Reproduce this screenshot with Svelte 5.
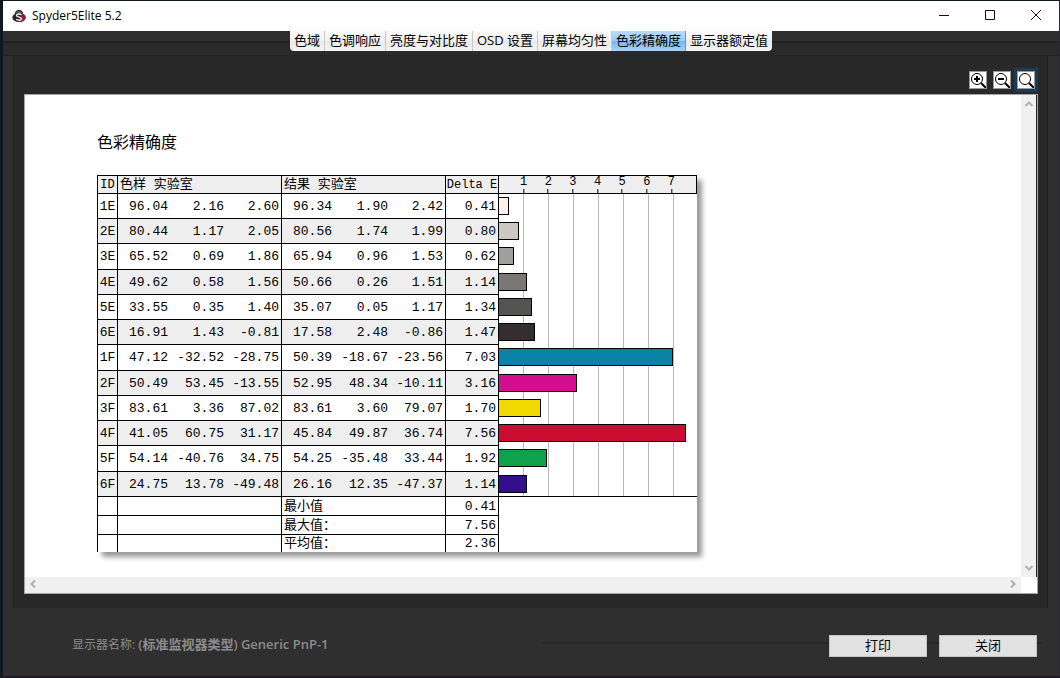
<script lang="ts">
    type Patch = { id: string; sample: string[]; result: string[]; delta: string; color: string };

    const tabs = ['色域', '色调响应', '亮度与对比度', 'OSD 设置', '屏幕均匀性', '色彩精确度', '显示器额定值'];
    const axis = [1, 2, 3, 4, 5, 6, 7];
    const axisMax = 8;

    const patches: Patch[] = [
        { id: '1E', sample: ['96.04', '2.16', '2.60'], result: ['96.34', '1.90', '2.42'], delta: '0.41', color: '#fdf1ea' },
        { id: '2E', sample: ['80.44', '1.17', '2.05'], result: ['80.56', '1.74', '1.99'], delta: '0.80', color: '#cbc7c2' },
        { id: '3E', sample: ['65.52', '0.69', '1.86'], result: ['65.94', '0.96', '1.53'], delta: '0.62', color: '#a19f9c' },
        { id: '4E', sample: ['49.62', '0.58', '1.56'], result: ['50.66', '0.26', '1.51'], delta: '1.14', color: '#7a7876' },
        { id: '5E', sample: ['33.55', '0.35', '1.40'], result: ['35.07', '0.05', '1.17'], delta: '1.34', color: '#545452' },
        { id: '6E', sample: ['16.91', '1.43', '-0.81'], result: ['17.58', '2.48', '-0.86'], delta: '1.47', color: '#342e31' },
        { id: '1F', sample: ['47.12', '-32.52', '-28.75'], result: ['50.39', '-18.67', '-23.56'], delta: '7.03', color: '#0b83a6' },
        { id: '2F', sample: ['50.49', '53.45', '-13.55'], result: ['52.95', '48.34', '-10.11'], delta: '3.16', color: '#d30f90' },
        { id: '3F', sample: ['83.61', '3.36', '87.02'], result: ['83.61', '3.60', '79.07'], delta: '1.70', color: '#f2da00' },
        { id: '4F', sample: ['41.05', '60.75', '31.17'], result: ['45.84', '49.87', '36.74'], delta: '7.56', color: '#ca0d30' },
        { id: '5F', sample: ['54.14', '-40.76', '34.75'], result: ['54.25', '-35.48', '33.44'], delta: '1.92', color: '#10a24b' },
        { id: '6F', sample: ['24.75', '13.78', '-49.48'], result: ['26.16', '12.35', '-47.37'], delta: '1.14', color: '#330f8c' }
    ];

    const summary = [
        { label: '最小值', value: '0.41' },
        { label: '最大值：', value: '7.56' },
        { label: '平均值：', value: '2.36' }
    ];

    let activeTab = $state('色彩精确度');
    let zoomMode = $state('fit');
</script>

<div class="window">
    <header class="titlebar">
        <svg class="logo" viewBox="0 0 14 14" aria-hidden="true">
            <path d="M3.500 5C3.500 2 5 1.300 7 1.300S10.500 2 10.500 5" fill="#555" stroke="#222" />
            <ellipse cx="7" cy="8.500" rx="6.700" ry="4.600" fill="#2b2529" />
            <path d="M8 4.500c4 0 6 2 5.500 4.500-.5 2-2.500 3.800-5.500 3.800z" fill="#8b1f38" />
            <path d="M9.500 5.800C8 4.600 4.500 4.800 4.500 6.500c0 2 5 1.200 5 3.200 0 1.900-3.500 1.900-5.300.6" fill="none" stroke="#f3eef0" stroke-width="1.400" />
        </svg>
        <h1>Spyder5Elite 5.2</h1>
        <div class="window-buttons">
            <button type="button" aria-label="最小化">
                <svg viewBox="0 0 12 12"><path d="M1 5.500h10" /></svg>
            </button>
            <button type="button" aria-label="最大化">
                <svg viewBox="0 0 12 12"><path d="M1.500 .5h9v9h-9z" /></svg>
            </button>
            <button type="button" aria-label="关闭窗口">
                <svg viewBox="0 0 12 12"><path d="M1 0l10 10M11 0L1 10" /></svg>
            </button>
        </div>
    </header>

    <div class="tabstrip">
        <div class="tabs" role="tablist">
            {#each tabs as tab}
                <button
                    type="button"
                    role="tab"
                    class:active={tab === activeTab}
                    aria-selected={tab === activeTab}
                    onclick={() => (activeTab = tab)}>{tab}</button>
            {/each}
        </div>
    </div>

    <main>
        <div class="tools">
            {#each ['in', 'out', 'fit'] as mode}
                <button
                    type="button"
                    class:active={mode === zoomMode}
                    aria-label={mode === 'in' ? '放大' : mode === 'out' ? '缩小' : '适合窗口'}
                    onclick={() => (zoomMode = mode)}>
                    <svg viewBox="0 0 16 16">
                        <circle cx="7" cy="7" r="5.500" />
                        <path class="thick" d="M11 11l5 5" />
                        {#if mode !== 'fit'}<path class="thick" d="M4 7h6" />{/if}
                        {#if mode === 'in'}<path class="thick" d="M7 4v6" />{/if}
                    </svg>
                </button>
            {/each}
        </div>

        <section class="viewer">
            <div class="page">
                <h2>色彩精确度</h2>
                <table>
                    <colgroup>
                        <col class="c-id" />
                        <col class="c-first" />
                        <col class="c-num" />
                        <col class="c-num" />
                        <col class="c-first" />
                        <col class="c-num" />
                        <col class="c-num" />
                        <col class="c-delta" />
                        <col class="c-chart" />
                    </colgroup>
                    <thead>
                        <tr>
                            <th class="id">ID</th>
                            <th class="group" colspan="3">色样 实验室</th>
                            <th class="group" colspan="3">结果 实验室</th>
                            <th class="delta">Delta E</th>
                            <th class="axis">
                                <div class="scale">
                                    {#each axis as n}<span>{n}</span>{/each}
                                </div>
                            </th>
                        </tr>
                    </thead>
                    <tbody class="patches">
                        {#each patches as p}
                            <tr>
                                <td class="id">{p.id}</td>
                                {#each p.sample as v, i}<td class:edge={i === 2}>{v}</td>{/each}
                                {#each p.result as v, i}<td class:edge={i === 2}>{v}</td>{/each}
                                <td class="edge">{p.delta}</td>
                                <td class="chart">
                                    <div class="bar" style="width: {(Number(p.delta) / axisMax) * 100}%; background: {p.color}"></div>
                                </td>
                            </tr>
                        {/each}
                    </tbody>
                    <tbody class="summary">
                        {#each summary as s}
                            <tr>
                                <td class="edge"></td>
                                <td class="edge" colspan="3"></td>
                                <td class="label edge" colspan="3">{s.label}</td>
                                <td class="edge">{s.value}</td>
                                <td class="blank"></td>
                            </tr>
                        {/each}
                    </tbody>
                </table>
            </div>
            <div class="scroll vertical">
                <button type="button" aria-label="向上滚动"><svg viewBox="0 0 10 10"><path d="M1.500 7L5 3.500 8.500 7" /></svg></button>
                <button type="button" aria-label="向下滚动"><svg viewBox="0 0 10 10"><path d="M1.500 3L5 6.500 8.500 3" /></svg></button>
            </div>
            <div class="scroll horizontal">
                <button type="button" aria-label="向左滚动"><svg viewBox="0 0 10 10"><path d="M7 1.500L3.500 5 7 8.500" /></svg></button>
                <button type="button" aria-label="向右滚动"><svg viewBox="0 0 10 10"><path d="M3 1.500L6.500 5 3 8.500" /></svg></button>
            </div>
        </section>
    </main>

    <footer>
        <p>显示器名称: <strong>(标准监视器类型) Generic PnP-1</strong></p>
        <div class="actions">
            <button type="button">打印</button>
            <button type="button">关闭</button>
        </div>
    </footer>
</div>

<style>
    :global(body) {
        background: #10151f;
    }

    .window {
        box-sizing: border-box;
        min-height: 100vh;
        display: flex;
        flex-direction: column;
        border: solid #111722;
        border-width: 1px 1px 2px 3px;
        border-right-color: #2b2630;
        border-bottom-color: #211a2a;
        background: #2f2f2f;
        font-family: 'Open Sans', 'Noto Sans CJK SC', sans-serif;
        font-size: 13px;
    }

    button {
        padding: 0;
        border: 0;
        font: inherit;
        color: #000;
    }

    .titlebar {
        display: flex;
        align-items: center;
        height: 30px;
        padding-left: 9px;
        background: #fff;
    }

    .logo {
        width: 14px;
        height: 14px;
    }

    h1 {
        margin: 0 auto 0 6px;
        font-size: 12px;
        font-weight: 400;
        line-height: 18px;
    }

    .window-buttons {
        display: flex;
    }

    .window-buttons button {
        display: grid;
        place-items: center;
        width: 46px;
        height: 30px;
        background: none;
    }

    .window-buttons svg {
        width: 12px;
        height: 12px;
        fill: none;
        stroke: #111;
    }

    .tabstrip {
        display: flex;
        justify-content: center;
        align-items: flex-start;
        height: 25px;
        background: linear-gradient(#2f2f2f 10px, #222 10px, #222 12px, #2a2a2a 12px, #2a2a2a 24px, #242424 24px);
    }

    .tabs {
        display: flex;
        overflow: hidden;
        border-radius: 0 0 4px 4px;
    }

    .tabs button {
        height: 20px;
        padding: 0 4px 2px;
        border-right: 1px solid #c9c9c9;
        background: linear-gradient(#fafafa, #f0f0f0 50%, #e9e9e9 50%, #f4f4f4);
        line-height: 18px;
        white-space: nowrap;
    }

    .tabs button:last-child {
        border-right: 0;
    }

    .tabs .active {
        border-color: #5f9bd2;
        background: linear-gradient(#b9dbfa, #9accf8 50%, #75b5f0 50%, #a5d5fb);
    }

    main {
        flex: 1;
        display: flex;
        flex-direction: column;
        margin: 0 11px 0 10px;
        padding: 0 9px 14px 10px;
        border-left: 1px solid #202020;
        border-right: 1px solid #202020;
        background: #292929;
    }

    .tools {
        display: flex;
        justify-content: flex-end;
        gap: 6px;
        padding: 15px 3px 5px;
    }

    .tools button {
        width: 18px;
        height: 18px;
        border: 1px solid #999;
        background: #fff;
    }

    .tools .active {
        box-shadow: 0 0 0 3px #1c3c55;
    }

    .tools svg {
        display: block;
        width: 16px;
        height: 16px;
        fill: none;
        stroke: #000;
    }

    .tools .thick {
        stroke-width: 2;
    }

    .viewer {
        flex: 1;
        display: grid;
        grid-template-columns: minmax(0, 1fr) 16px;
        grid-template-rows: 1fr 16px;
        border: 1px solid #a5a5a5;
        background: #fff;
    }

    .page {
        overflow: hidden;
        padding: 35px 72px 25px;
    }

    h2 {
        margin: 0 0 21px;
        font-size: 16px;
        font-weight: 400;
        line-height: 24px;
    }

    table {
        width: 600px;
        table-layout: fixed;
        border-collapse: separate;
        border-spacing: 0;
        border-left: 1px solid #000;
        box-shadow: 5px 5px 5px #999;
        background: #fff;
        font-family: 'Liberation Mono', 'Noto Sans CJK SC', monospace;
        font-size: 13px;
        line-height: 16px;
    }

    .c-id {
        width: 20px;
    }

    .c-first {
        width: 52px;
    }

    .c-num {
        width: 56px;
    }

    .c-delta {
        width: 53px;
    }

    th,
    td {
        box-sizing: border-box;
        padding: 0;
        white-space: nowrap;
    }

    th {
        height: 19px;
        border: solid #000;
        border-width: 1px 1px 1px 0;
        background: #eee;
        font-size: 12px;
        font-weight: 400;
        text-align: center;
    }

    .group {
        padding-left: 2px;
        font-size: 13px;
        text-align: left;
    }

    .scale {
        display: grid;
        grid-template-columns: repeat(8, 1fr);
        height: 17px;
        line-height: 12px;
    }

    /* each label is centred on the right edge of its step, with a tick under it */
    .scale span {
        display: flex;
        flex-direction: column;
        align-items: center;
        transform: translateX(50%);
    }

    .scale span::after {
        content: '';
        width: 1px;
        height: 4px;
        margin-top: 1px;
        background: #000;
    }

    td {
        padding: 1px 2px 0 0;
        border-bottom: 1px solid #000;
        text-align: right;
    }

    .id,
    .edge {
        border-right: 1px solid #000;
    }

    .id {
        padding-right: 0;
        text-align: center;
    }

    .patches td {
        height: 25px;
    }

    .patches tr:nth-child(4n + 3) td {
        height: 26px;
    }

    .patches tr:nth-child(even) td {
        background: #eee;
    }

    .patches tr td.chart {
        padding: 3px 0 0;
        border-bottom: 0;
        background: repeating-linear-gradient(to right, #fff 0, #fff 24px, #b9b9b9 24px, #b9b9b9 25px);
        vertical-align: top;
    }

    .patches tr:last-child td.chart {
        border-bottom: 1px solid #000;
    }

    .bar {
        box-sizing: border-box;
        height: 18px;
        border: 1px solid #000;
        border-left: 0;
    }

    .summary td {
        height: 19px;
    }

    .summary .label {
        padding-left: 2px;
        text-align: left;
    }

    .summary td.blank {
        border: 0;
    }

    .summary tr:last-child td {
        height: 17px;
        padding-top: 0;
        border-bottom: 0;
    }

    .scroll {
        display: flex;
        justify-content: space-between;
        background: #f0f0f0;
    }

    .vertical {
        flex-direction: column;
        border-right: 1px solid #222;
    }

    .scroll button {
        display: grid;
        place-items: center;
        width: 16px;
        height: 18px;
        background: none;
    }

    .horizontal button {
        height: 14px;
    }

    .scroll svg {
        width: 10px;
        height: 10px;
        fill: none;
        stroke: #b0b0b0;
        stroke-width: 2;
    }

    footer {
        display: flex;
        align-items: center;
        justify-content: space-between;
        height: 68px;
        padding: 2px 18px 0 69px;
        box-sizing: border-box;
        color: #8c8c8c;
        font-size: 12px;
    }

    footer p {
        margin: 0;
        white-space: nowrap;
    }

    footer strong {
        font-size: 13px;
        font-weight: 600;
    }

    .actions {
        display: flex;
        justify-content: flex-end;
        gap: 12px;
        width: 51%;
        padding: 5px 4px 0 0;
        background: linear-gradient(#262626, #262626) left center / 100% 2px no-repeat;
    }

    .actions button {
        width: 98px;
        height: 22px;
        padding-bottom: 2px;
        border: 1px solid #c4c4c4;
        background: #e1e1e1;
        line-height: 18px;
        font-size: 13px;
    }
</style>
